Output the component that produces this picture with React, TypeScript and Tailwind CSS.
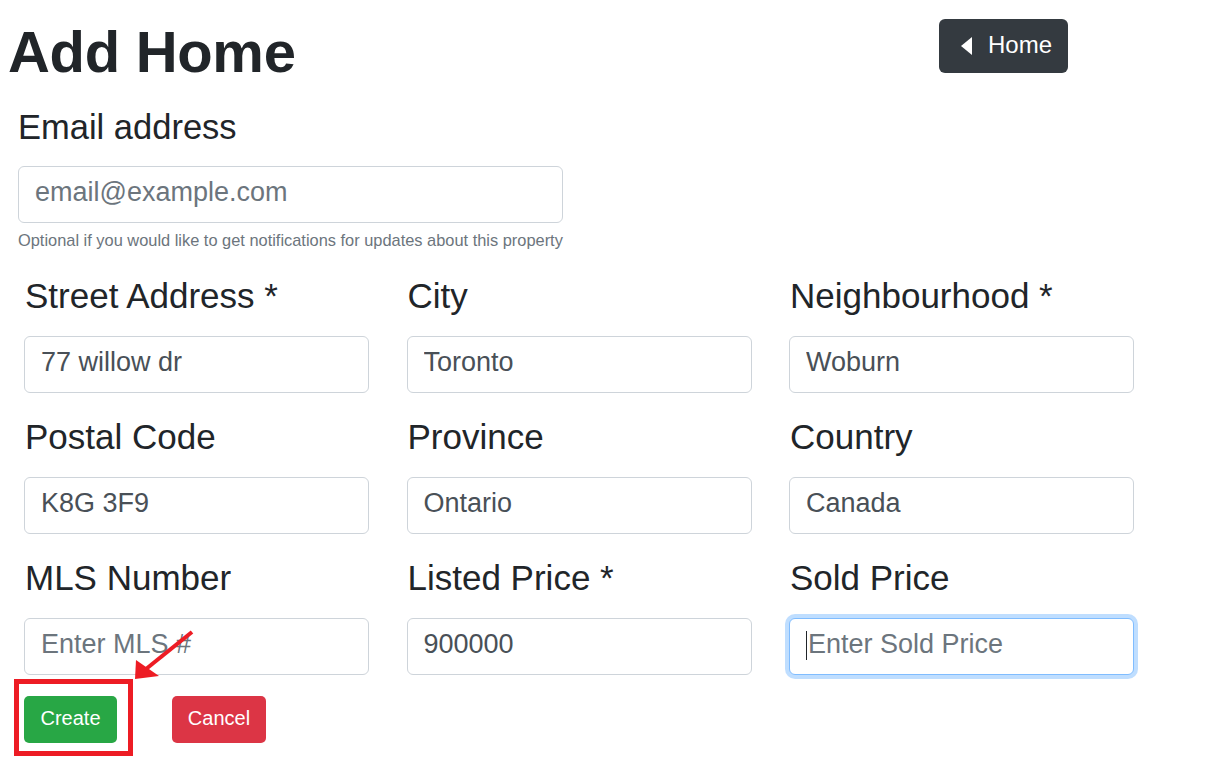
import React from "react";

const labelCls = "block text-[35px] leading-[51px] text-[#212529] mb-[15px] pl-[1px]";
const inputCls =
  "block w-[345px] h-[57px] border border-[#ced4da] rounded-[6px] bg-white px-[16px] pb-[4px] text-[27px] text-[#495057] placeholder:text-[#6c757d] outline-none";

function Field({ label, value, placeholder }: { label: string; value?: string; placeholder?: string }) {
  return (
    <div>
      <label className={labelCls}>{label}</label>
      <input className={inputCls} defaultValue={value} placeholder={placeholder} readOnly />
    </div>
  );
}

export default function App() {
  return (
    <div className="relative w-[1214px] h-[760px] bg-white font-['Liberation_Sans',Arial,sans-serif] overflow-hidden">
      <div className="flex w-[1068px] h-[102px] justify-between items-start">
        <h1 className="pl-[8px] pt-[17px] text-[58px] leading-[70px] font-bold text-[#212529] tracking-[-0.3px]">
          Add Home
        </h1>
        <button className="mt-[19px] w-[129px] h-[54px] rounded-[6px] bg-[#343a40] flex items-center pl-[22px] text-white text-[24px] pb-[2px]">
          <svg width="11" height="18" viewBox="0 0 11 18" className="mr-[16px] mt-[2px]">
            <polygon points="0,9 11,0 11,18" fill="white" />
          </svg>
          Home
        </button>
      </div>

      <div className="ml-[18px] w-[545px]">
        <label className="block text-[34.5px] leading-[51px] text-[#212529] mb-[13px]">Email address</label>
        <input
          className="block w-[545px] h-[57px] border border-[#ced4da] rounded-[6px] bg-white px-[16px] pb-[4px] text-[27px] text-[#495057] placeholder:text-[#6c757d] outline-none"
          placeholder="email@example.com"
          readOnly
        />
        <div className="mt-[6px] text-[16.4px] leading-[22.5px] text-[#6c757d] whitespace-nowrap">
          Optional if you would like to get notifications for updates about this property
        </div>
      </div>

      <div className="mt-[18.5px] pl-[24px] grid grid-cols-[345px_345px_345px] gap-x-[37.5px] gap-y-[18px]">
        <Field label="Street Address *" value="77 willow dr" />
        <Field label="City" value="Toronto" />
        <Field label="Neighbourhood *" value="Woburn" />
        <Field label="Postal Code" value="K8G 3F9" />
        <Field label="Province" value="Ontario" />
        <Field label="Country" value="Canada" />
        <Field label="MLS Number" placeholder="Enter MLS #" />
        <Field label="Listed Price *" value="900000" />
        <div>
          <label className={labelCls}>Sold Price</label>
          <div className="relative">
            <input
              className="block w-[345px] h-[57px] border border-[#80bdff] rounded-[6px] bg-white px-[18px] pb-[4px] text-[27px] text-[#495057] placeholder:text-[#6c757d] outline-none shadow-[0_0_0_4px_rgba(0,123,255,0.25)]"
              placeholder="Enter Sold Price"
              readOnly
            />
            <span className="absolute left-[17px] top-[13px] w-[1px] h-[29px] bg-[#212529]" />
          </div>
        </div>
      </div>

      <div className="mt-[21px] pl-[24px] flex gap-[55px]">
        <button className="w-[93px] h-[47px] rounded-[5px] bg-[#28a745] text-white text-[20px] pb-[3px]">Create</button>
        <button className="w-[94px] h-[47px] rounded-[5px] bg-[#dc3545] text-white text-[20px] pb-[3px]">Cancel</button>
      </div>

      <div className="absolute left-[14px] top-[679px] w-[119px] h-[77px] border-[5px] border-[#ed1c24]" />
      <svg className="absolute left-0 top-0 pointer-events-none" width="1214" height="760">
        <line x1="192" y1="632" x2="146" y2="669" stroke="#ed1c24" strokeWidth="4" />
        <polygon points="135,679 136,660 159,676" fill="#ed1c24" />
      </svg>
    </div>
  );
}
